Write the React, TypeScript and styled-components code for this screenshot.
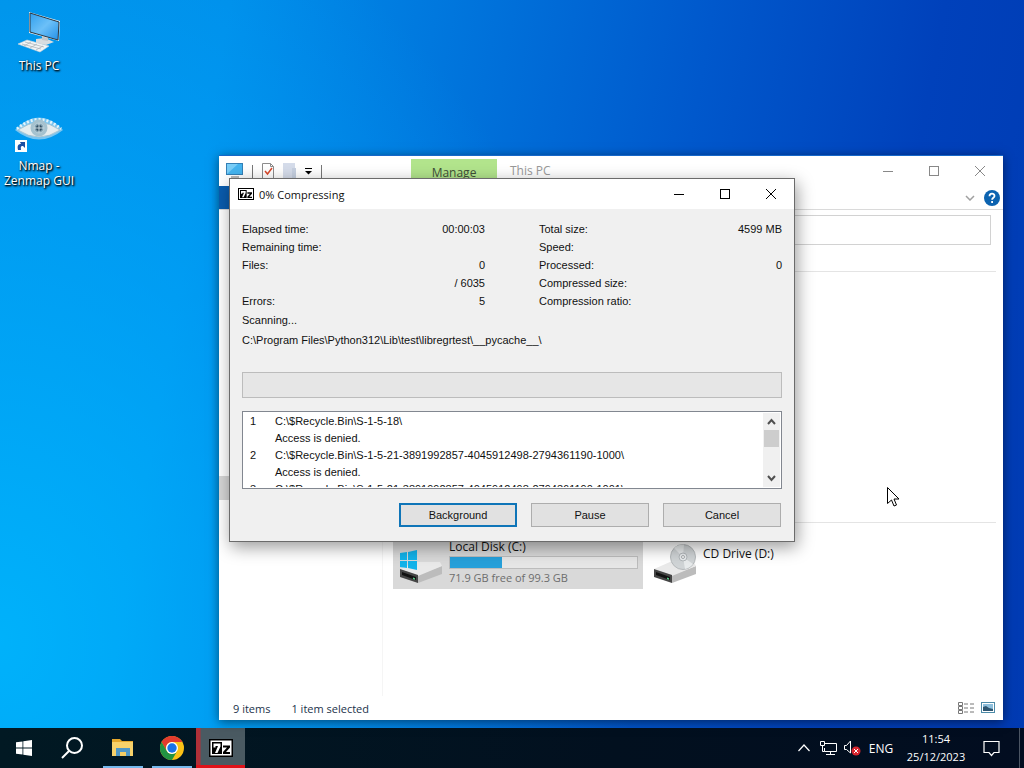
import React from "react";
import styled, { createGlobalStyle } from "styled-components";

const Global = createGlobalStyle`
  * { box-sizing: border-box; }
  body { margin: 0; font-family: "Open Sans", "Noto Sans", sans-serif; font-size: 12px; color: #111; }
  button { font: inherit; color: inherit; padding: 0; border: 0; background: transparent; display: flex; align-items: center; justify-content: center; }
`;

const Screen = styled.div`
  min-height: 100vh;
  display: flex;
  flex-direction: column;
  overflow: hidden;
`;

const Desktop = styled.main`
  position: relative;
  flex: 1;
  background:
    radial-gradient(ellipse 62% 110% at 0% 88%, rgba(0, 186, 255, 0.8), rgba(0, 176, 255, 0.45) 50%, rgba(0, 160, 255, 0) 100%),
    linear-gradient(100deg, #0090e8 0%, #008eea 20%, #0078de 38%, #0058cc 62%, #0041bb 82%, #003ab2 100%);
`;

const IconColumn = styled.div`
  display: flex;
  flex-direction: column;
  width: 78px;
  padding-top: 8px;
`;

const DesktopIcon = styled.button`
  && {
    flex-direction: column;
    justify-content: flex-start;
    height: 100px;
    color: #fff;
    line-height: 15px;
    text-shadow: 1px 1px 2px #000, 1px 1px 2px #000;
  }
`;

const IconLabel = styled.span`
  margin-top: 2px;
  white-space: pre-line;
`;

const Explorer = styled.section`
  position: absolute;
  left: 219px;
  right: 21px;
  top: 155px;
  bottom: 8px;
  min-width: 640px;
  display: flex;
  flex-direction: column;
  background: #fff;
  border-top: 1px solid #1667c9;
  box-shadow: 0 2px 10px rgba(0, 0, 0, 0.5);
`;

const ExplorerBar = styled.header`
  display: flex;
  height: 30px;
`;

const QuickAccess = styled.div`
  display: flex;
  align-items: center;
  gap: 8px;
  width: 192px;
  padding-left: 7px;
`;

const Separator = styled.span`
  width: 1px;
  height: 13px;
  background: #777;
`;

const ManageTab = styled.button`
  && {
    width: 86px;
    margin-top: 3px;
    background: #b2e48c;
    color: #3f4f38;
  }
`;

const ExplorerTitle = styled.h1`
  flex: 1;
  margin: 0;
  padding-left: 13px;
  font-size: 12px;
  font-weight: 400;
  line-height: 30px;
  color: #999;
`;

const Caption = styled.button<{ $muted?: boolean }>`
  && {
    width: 46px;
    height: 30px;
    color: ${(p) => (p.$muted ? "#888" : "#000")};
  }
`;

const RibbonTabs = styled.div`
  display: flex;
  align-items: center;
  justify-content: flex-end;
  gap: 9px;
  height: 24px;
  padding-right: 3px;
  border-bottom: 1px solid #dadada;
`;

const FileTab = styled.button`
  && {
    width: 56px;
    height: 23px;
    margin-right: auto;
    background: #0a5cae;
    color: #fff;
  }
`;

const AddressRow = styled.div`
  padding: 5px 12px 5px 140px;
`;

const AddressInput = styled.input`
  display: block;
  width: 100%;
  height: 30px;
  border: 1px solid #d2d2d2;
  outline: 0;
  font: inherit;
`;

const ExplorerBody = styled.div`
  flex: 1;
  display: flex;
`;

const NavPane = styled.nav`
  width: 164px;
  padding-top: 226px;
  border-right: 1px solid #f5f5f5;
`;

const NavItem = styled.a`
  display: block;
  height: 24px;
  background: #d6d6d6;
`;

const FilePane = styled.div`
  flex: 1;
  display: flex;
  flex-direction: column;
  padding: 21px 7px 0 10px;
`;

const FolderGroup = styled.section`
  height: 251px;
  border-top: 1px solid #e4e4e4;
`;

const DriveGroup = styled.section`
  display: flex;
  gap: 4px;
  padding-top: 14px;
  border-top: 1px solid #e4e4e4;
`;

const Drive = styled.div<{ $selected?: boolean }>`
  display: flex;
  width: 250px;
  height: 52px;
  padding: 2px 5px 0 6px;
  gap: 7px;
  background: ${(p) => (p.$selected ? "#d9d9d9" : "transparent")};
`;

const DriveInfo = styled.div<{ $single?: boolean }>`
  flex: 1;
  padding-top: ${(p) => (p.$single ? 7 : 0)}px;
  line-height: 16px;
`;

const Capacity = styled.div`
  height: 13px;
  margin: 1px 0;
  border: 1px solid #bcbcbc;
  background: #e6e6e6;
`;

const Used = styled.div`
  height: 100%;
  background: #26a0da;
`;

const Muted = styled.div`
  font-size: 11px;
  color: #6d6d6d;
`;

const StatusBar = styled.footer`
  display: flex;
  align-items: center;
  gap: 21px;
  height: 24px;
  padding: 0 8px 0 14px;
  font-size: 11px;
  color: #22324a;
`;

const ViewButtons = styled.div`
  display: flex;
  gap: 6px;
  margin-left: auto;
`;

const Dialog = styled.section`
  position: absolute;
  left: 229px;
  top: 178px;
  width: 566px;
  border: 1px solid #6b6b6b;
  background: #f0f0f0;
  box-shadow: 2px 5px 16px rgba(0, 0, 0, 0.4);
  font-family: "Liberation Sans", Arial, sans-serif;
  font-size: 11px;
`;

const DialogBar = styled.header`
  display: flex;
  align-items: center;
  height: 30px;
  padding-left: 8px;
  background: #fff;
`;

const DialogTitle = styled.h2`
  flex: 1;
  margin: 0 0 0 5px;
  font-family: "Open Sans", "Noto Sans", sans-serif;
  font-size: 11px;
  font-weight: 400;
`;

const DialogBody = styled.div`
  padding: 11px 12px 14px;
`;

const Stats = styled.div`
  display: grid;
  grid-template-columns: 1fr 1fr;
  column-gap: 54px;
`;

const StatList = styled.dl`
  margin: 0;
`;

const Stat = styled.div`
  display: flex;
  justify-content: space-between;
  height: 18px;
  line-height: 18px;
  dt, dd { margin: 0; }
`;

const StatusText = styled.p`
  margin: 0;
  line-height: 20px;
`;

const ProgressTrack = styled.div`
  height: 26px;
  margin: 22px 0 13px;
  border: 1px solid #bcbcbc;
  background: #e6e6e6;
`;

const MessageBox = styled.div`
  display: flex;
  height: 78px;
  padding: 1px;
  border: 1px solid #828790;
  background: #fff;
`;

const Messages = styled.table`
  border-collapse: collapse;
  line-height: 17px;
  td { padding: 0; vertical-align: top; white-space: pre; }
  td:first-child { width: 25px; }
`;

const MessageView = styled.div`
  flex: 1;
  overflow: hidden;
  padding: 0 6px;
`;

const Scrollbar = styled.div`
  display: flex;
  flex-direction: column;
  width: 17px;
  background: #f0f0f0;
`;

const Thumb = styled.div`
  flex: 1;
  &::before { content: ""; display: block; height: 17px; margin: 0 1px; background: #cdcdcd; }
`;

const ScrollButton = styled.button`
  && { height: 17px; }
`;

const Actions = styled.div`
  display: flex;
  justify-content: flex-end;
  gap: 14px;
  padding: 14px 1px 0 0;
`;

const ActionButton = styled.button<{ $primary?: boolean }>`
  && {
    width: 118px;
    height: 24px;
    background: #e1e1e1;
    border: ${(p) => (p.$primary ? "2px solid #0f75b8" : "1px solid #adadad")};
  }
`;

const Pointer = styled.svg`
  position: absolute;
  left: 887px;
  top: 487px;
`;

const Taskbar = styled.footer`
  display: flex;
  height: 40px;
  background: linear-gradient(90deg, #011923, #02101f 60%, #020d20);
  color: #fff;
`;

const Running = styled.div`
  display: flex;
  margin-left: 2px;
`;

const TaskButton = styled.button<{ $open?: boolean; $alert?: boolean }>`
  && {
    width: ${(p) => (p.$open || p.$alert ? 49 : 48)}px;
    ${(p) => p.$open && "background: linear-gradient(#76b9ed, #76b9ed) center bottom / 40px 2px no-repeat;"}
    ${(p) =>
      p.$alert &&
      "background: linear-gradient(#e01219, #e01219) bottom / 100% 3px no-repeat, linear-gradient(90deg, #b03038 4px, #4a5a62 5px);"}
  }
`;

const Tray = styled.div`
  display: flex;
  align-items: center;
  margin-left: auto;
  font-size: 11px;
`;

const TrayButton = styled.button<{ $w: number }>`
  && { width: ${(p) => p.$w}px; height: 40px; }
`;

const Language = styled(TrayButton)`
  && { font-size: 12px; }
`;

const Clock = styled.button`
  && { width: 76px; height: 40px; flex-direction: column; line-height: 18px; }
`;

const ShowDesktop = styled.button`
  && { width: 5px; height: 40px; margin-left: 11px; border-left: 1px solid #4b5563; }
`;

const MinGlyph = () => (
  <svg width="12" height="12" stroke="currentColor" shapeRendering="crispEdges"><path d="M1 6.500H11" /></svg>
);
const MaxGlyph = () => (
  <svg width="12" height="12" fill="none" stroke="currentColor"><rect x="1.500" y="1.500" width="9" height="9" /></svg>
);
const CloseGlyph = () => (
  <svg width="12" height="12" stroke="currentColor"><path d="M1 1L11 11M11 1L1 11" /></svg>
);

const PcIcon = () => (
  <svg width="48" height="48" viewBox="0 0 48 48">
    <defs>
      <linearGradient id="scr" x1="0" y1="0" x2="1" y2="1">
        <stop offset="0" stopColor="#2f9fee" /><stop offset=".5" stopColor="#6cc0f8" /><stop offset="1" stopColor="#2390e6" />
      </linearGradient>
    </defs>
    <path d="M21 31l9-1 9 4-8 3-10-2z" fill="#d9dde0" />
    <path d="M27 27l6 2v4l-6-1z" fill="#c3c8cc" />
    <path d="M14 4l31 9-1 20-30-8z" fill="#e6eef3" />
    <path d="M15 5l29 9-1 18-28-8z" fill="url(#scr)" stroke="#2b3640" />
    <path d="M3 36l9-4 22 6-9 6z" fill="#f2f4f5" stroke="#cfd4d8" strokeWidth=".6" />
    <path d="M7 36l19 5M10 34l19 5M9 38l7-4M15 40l7-4M21 42l7-4" stroke="#a8afb5" strokeWidth=".7" />
  </svg>
);

const EyeIcon = () => (
  <svg width="48" height="48" viewBox="0 0 48 48">
    <path d="M0 22Q24 -3 48 22Q24 41 0 22z" fill="#8fcdf0" opacity=".85" />
    <path d="M2 21Q24 2 46 21" fill="none" stroke="#e3f3fa" strokeWidth="3" strokeDasharray="2 2" />
    <path d="M3 22Q24 7 45 22Q24 36 3 22z" fill="#e6edef" stroke="#9cbccb" strokeWidth=".8" />
    <circle cx="24" cy="20" r="8.500" fill="#a5c2cf" />
    <circle cx="24" cy="20" r="5" fill="#7f9fb0" stroke="#b9d0da" />
    <circle cx="24" cy="20" r="3" fill="#2f4c60" />
    <path d="M24 15v10M19 20h10" stroke="#c9dae2" />
    <rect x="0" y="32" width="12" height="12" fill="#fff" />
    <path d="M3 42c-1-4 0-6 3-6l-1-2h5v6l-2-2c-3 0-2 2-2 4z" fill="#1c4fa3" />
  </svg>
);

const SevenZip = ({ w, h }: { w: number; h: number }) => (
  <svg width={w} height={h} viewBox="0 0 24 18">
    <rect width="24" height="18" fill="#000" />
    <rect x="1.500" y="1.500" width="21" height="15" fill="#fff" />
    <rect x="3" y="3" width="10" height="12" fill="#000" />
    <path d="M4.500 4.500h7v3L8.500 14H6l3-7H6.500v1.500h-2z" fill="#fff" />
    <path d="M14 6.500h7v2L17 13h4v2h-7v-2l4-4.500h-4z" fill="#000" />
  </svg>
);

const MiniPc = () => (
  <svg width="18" height="16" viewBox="0 0 18 16">
    <rect x=".5" y=".5" width="16" height="11" fill="#45b4ef" stroke="#347fb5" />
    <path d="M1 11L12 1H1z" fill="#79cdf7" />
    <path d="M5 14h8" stroke="#777" />
  </svg>
);

const CheckPage = () => (
  <svg width="14" height="16" viewBox="0 0 14 16">
    <path d="M1.500 .5h8l3 3v12h-11z" fill="#fff" stroke="#8c8c8c" />
    <path d="M9.500 .5v3h3" fill="none" stroke="#8c8c8c" />
    <path d="M4 8l2.500 3L11 5" fill="none" stroke="#d9482b" strokeWidth="1.500" />
  </svg>
);

const FolderPage = () => (
  <svg width="13" height="16" viewBox="0 0 13 16"><path d="M0 0h12v16H0z" fill="#d5dcea" /><path d="M9 5h4v11H9z" fill="#c6d0e0" /></svg>
);

const DropGlyph = () => (
  <svg width="9" height="8" viewBox="0 0 9 8"><path d="M1 1.500h7" stroke="#000" /><path d="M1 4h7L4.500 7.500z" fill="#000" /></svg>
);

const DriveBase = () => (
  <>
    <path d="M19 36L43 27v8L19 44z" fill="#bcbcbc" />
    <path d="M1 30L17 23h24l2 4L19 37z" fill="#e9e9e9" />
    <path d="M1 30l18 6v8L1 38z" fill="#454545" />
    <path d="M3 33l14 5v3L3 36z" fill="#111" />
    <path d="M14 38.500l2 .7v1.600l-2-.7z" fill="#59d18a" />
  </>
);

const DiskIcon = () => (
  <svg width="43" height="46" viewBox="0 0 43 46">
    <DriveBase />
    <path d="M1 14l7-1v8H1zM9 13l9-2v10H9zM1 22h7v7l-7-1zM9 22h9v9l-9-2z" fill="#12b3ea" />
  </svg>
);

const CdIcon = () => (
  <svg width="43" height="46" viewBox="0 0 43 46">
    <DriveBase />
    <circle cx="30" cy="18" r="12.500" fill="#d0d4d6" stroke="#b5b9bb" />
    <path d="M30 18L21 9a13 13 0 0 1 10-3.500zM30 18l10 7a13 13 0 0 1-8 5z" fill="#e8ebec" />
    <circle cx="30" cy="18" r="4" fill="#e9ecee" stroke="#b2b7ba" />
    <circle cx="30" cy="18" r="1.500" fill="#fff" stroke="#a5aaad" />
  </svg>
);

const WinLogo = () => (
  <svg width="16" height="16" viewBox="0 0 16 16" fill="#fff"><path d="M0 2.300L6.500 1.400V7.600H0zM7.300 1.300L16 0v7.600H7.300zM0 8.400h6.500v6.200L0 13.700zM7.300 8.400H16V16L7.300 14.700z" /></svg>
);

const SearchGlyph = () => (
  <svg width="22" height="22" viewBox="0 0 22 22" fill="none" stroke="#fff" strokeWidth="2"><circle cx="13.500" cy="8.500" r="7.500" /><path d="M8 14L1 21" /></svg>
);

const FolderGlyph = () => (
  <svg width="22" height="18" viewBox="0 0 22 18">
    <path d="M0 0h8l2 2h11v4H0z" fill="#e5a82c" />
    <path d="M0 3h21v14H0z" fill="#f8d26a" />
    <path d="M4 17V9h14v8h-4v-4H8v4z" fill="#4f97c6" />
    <path d="M8 13h6v4H8z" fill="#f4cd65" />
  </svg>
);

const ChromeGlyph = () => (
  <svg width="24" height="24" viewBox="0 0 24 24">
    <circle cx="12" cy="12" r="12" fill="#fbc116" />
    <path d="M1.600 6A12 12 0 0 1 22.400 6H12a6 6 0 0 0-5.200 9z" fill="#e33b2e" />
    <path d="M1.600 6A12 12 0 0 0 12 24l5.200-9A6 6 0 0 1 6.800 15z" fill="#229342" />
    <circle cx="12" cy="12" r="6" fill="#fff" />
    <circle cx="12" cy="12" r="4.700" fill="#1a73e8" />
  </svg>
);

const left: [string, string][] = [
  ["Elapsed time:", "00:00:03"],
  ["Remaining time:", ""],
  ["Files:", "0"],
  ["", "/ 6035"],
  ["Errors:", "5"],
];
const right: [string, string][] = [
  ["Total size:", "4599 MB"],
  ["Speed:", ""],
  ["Processed:", "0"],
  ["Compressed size:", ""],
  ["Compression ratio:", ""],
];
const messages: [string, string][] = [
  ["1", "C:\\$Recycle.Bin\\S-1-5-18\\"],
  ["", "Access is denied."],
  ["2", "C:\\$Recycle.Bin\\S-1-5-21-3891992857-4045912498-2794361190-1000\\"],
  ["", "Access is denied."],
  ["3", "C:\\$Recycle.Bin\\S-1-5-21-3891992857-4045912498-2794361190-1001\\"],
];

const StatColumn = ({ rows }: { rows: [string, string][] }) => (
  <StatList>
    {rows.map(([label, value], i) => (
      <Stat key={i}><dt>{label}</dt><dd>{value}</dd></Stat>
    ))}
  </StatList>
);

const WindowButtons = ({ muted }: { muted?: boolean }) => (
  <>
    <Caption $muted={muted} aria-label="Minimize"><MinGlyph /></Caption>
    <Caption $muted={muted} aria-label="Maximize"><MaxGlyph /></Caption>
    <Caption $muted={muted} aria-label="Close"><CloseGlyph /></Caption>
  </>
);

export default function App() {
  return (
    <Screen>
      <Global />
      <Desktop>
        <IconColumn>
          <DesktopIcon><PcIcon /><IconLabel>This PC</IconLabel></DesktopIcon>
          <DesktopIcon><EyeIcon /><IconLabel>{"Nmap -\nZenmap GUI"}</IconLabel></DesktopIcon>
        </IconColumn>

        <Explorer>
          <ExplorerBar>
            <QuickAccess>
              <MiniPc /><Separator /><CheckPage /><FolderPage /><DropGlyph /><Separator />
            </QuickAccess>
            <ManageTab>Manage</ManageTab>
            <ExplorerTitle>This PC</ExplorerTitle>
            <WindowButtons muted />
          </ExplorerBar>
          <RibbonTabs>
            <FileTab aria-label="File" />
            <svg width="10" height="6" viewBox="0 0 10 6" fill="none" stroke="#a0a0a0" strokeWidth="1.500"><path d="M1 1l4 4 4-4" /></svg>
            <svg width="16" height="16" viewBox="0 0 16 16">
              <circle cx="8" cy="8" r="8" fill="#0c63b0" />
              <path d="M5.500 6.200C5.500 2.800 10.500 2.900 10.500 5.900 10.500 7.800 8.100 7.700 8.100 9.700M8.100 11v2" fill="none" stroke="#fff" strokeWidth="1.800" />
            </svg>
          </RibbonTabs>
          <AddressRow><AddressInput aria-label="Address" /></AddressRow>
          <ExplorerBody>
            <NavPane><NavItem href="#" aria-label="This PC" /></NavPane>
            <FilePane>
              <FolderGroup />
              <DriveGroup>
                <Drive $selected>
                  <DiskIcon />
                  <DriveInfo>
                    Local Disk (C:)
                    <Capacity><Used style={{ width: "28%" }} /></Capacity>
                    <Muted>71.9 GB free of 99.3 GB</Muted>
                  </DriveInfo>
                </Drive>
                <Drive>
                  <CdIcon />
                  <DriveInfo $single>CD Drive (D:)</DriveInfo>
                </Drive>
              </DriveGroup>
            </FilePane>
          </ExplorerBody>
          <StatusBar>
            <span>9 items</span>
            <span>1 item selected</span>
            <ViewButtons>
              <button aria-label="Details">
                <svg width="17" height="12" viewBox="0 0 17 12" fill="none" stroke="#777"><path d="M.5 .5h4v3h-4zM.5 4.500h4v3h-4zM.5 8.500h4v3h-4z" /><path d="M6 2h11M6 6h11M6 10h11" strokeDasharray="4 2" /></svg>
              </button>
              <button aria-label="Large icons">
                <svg width="14" height="12" viewBox="0 0 14 12"><rect x=".5" y=".5" width="13" height="10" fill="#fff" stroke="#4d8ba8" /><path d="M2 2h10v7H2z" fill="#8ebfdc" /><path d="M2 5l3-1 3 2 4 1v2H2z" fill="#2e5671" /></svg>
              </button>
            </ViewButtons>
          </StatusBar>
        </Explorer>

        <Dialog role="dialog" aria-labelledby="dialog-title">
          <DialogBar>
            <SevenZip w={16} h={12} />
            <DialogTitle id="dialog-title">0% Compressing</DialogTitle>
            <WindowButtons />
          </DialogBar>
          <DialogBody>
            <Stats><StatColumn rows={left} /><StatColumn rows={right} /></Stats>
            <StatusText>Scanning...</StatusText>
            <StatusText>C:\Program Files\Python312\Lib\test\libregrtest\__pycache__\</StatusText>
            <ProgressTrack role="progressbar" aria-label="Compressing" aria-valuenow={0} />
            <MessageBox>
              <MessageView>
                <Messages>
                  <tbody>
                    {messages.map(([n, text], i) => (
                      <tr key={i}><td>{n}</td><td>{text}</td></tr>
                    ))}
                  </tbody>
                </Messages>
              </MessageView>
              <Scrollbar>
                <ScrollButton aria-label="Scroll up"><svg width="9" height="7" viewBox="0 0 9 7" fill="none" stroke="#505050" strokeWidth="2"><path d="M1 6l3.500-4L8 6" /></svg></ScrollButton>
                <Thumb />
                <ScrollButton aria-label="Scroll down"><svg width="9" height="7" viewBox="0 0 9 7" fill="none" stroke="#505050" strokeWidth="2"><path d="M1 1l3.500 4L8 1" /></svg></ScrollButton>
              </Scrollbar>
            </MessageBox>
            <Actions>
              <ActionButton $primary>Background</ActionButton>
              <ActionButton>Pause</ActionButton>
              <ActionButton>Cancel</ActionButton>
            </Actions>
          </DialogBody>
        </Dialog>

        <Pointer width="13" height="20" viewBox="0 0 13 20">
          <path d="M.5 .5v16l4-3.500 2.500 6 2.500-1-2.500-6h5z" fill="#fff" stroke="#000" />
        </Pointer>
      </Desktop>

      <Taskbar>
        <TaskButton aria-label="Start"><WinLogo /></TaskButton>
        <TaskButton aria-label="Search"><SearchGlyph /></TaskButton>
        <Running>
          <TaskButton $open aria-label="File Explorer"><FolderGlyph /></TaskButton>
          <TaskButton $open aria-label="Chrome"><ChromeGlyph /></TaskButton>
          <TaskButton $alert aria-label="7-Zip"><SevenZip w={24} h={18} /></TaskButton>
        </Running>
        <Tray>
          <TrayButton $w={24} aria-label="Show hidden icons"><svg width="12" height="8" viewBox="0 0 12 8" fill="none" stroke="#fff" strokeWidth="1.200"><path d="M.5 7L6 1l5.500 6" /></svg></TrayButton>
          <TrayButton $w={24} aria-label="Network">
            <svg width="17" height="15" viewBox="0 0 17 15" fill="none" stroke="#fff"><path d="M5 2.500h11.500v8H4.500V7M10.500 10.500v3M6 13.500h9M.5 .5h4v4h-4zM2.500 4.500v6h2" /></svg>
          </TrayButton>
          <TrayButton $w={24} aria-label="Volume muted">
            <svg width="17" height="16" viewBox="0 0 17 16"><path d="M.5 5.500h2L6.500 1v12L2.500 9.500h-2z" fill="none" stroke="#fff" /><circle cx="12" cy="11" r="4.500" fill="#d8252f" /><path d="M10 9l4 4M14 9l-4 4" stroke="#fff" /></svg>
          </TrayButton>
          <Language $w={34}>ENG</Language>
          <Clock><span>11:54</span><span>25/12/2023</span></Clock>
          <TrayButton $w={34} aria-label="Notifications">
            <svg width="17" height="17" viewBox="0 0 17 17" fill="none" stroke="#fff" strokeWidth="1.200"><path d="M1 1.500h15v11h-5L8.500 15.500 6 12.500H1z" /></svg>
          </TrayButton>
          <ShowDesktop aria-label="Show desktop" />
        </Tray>
      </Taskbar>
    </Screen>
  );
}
